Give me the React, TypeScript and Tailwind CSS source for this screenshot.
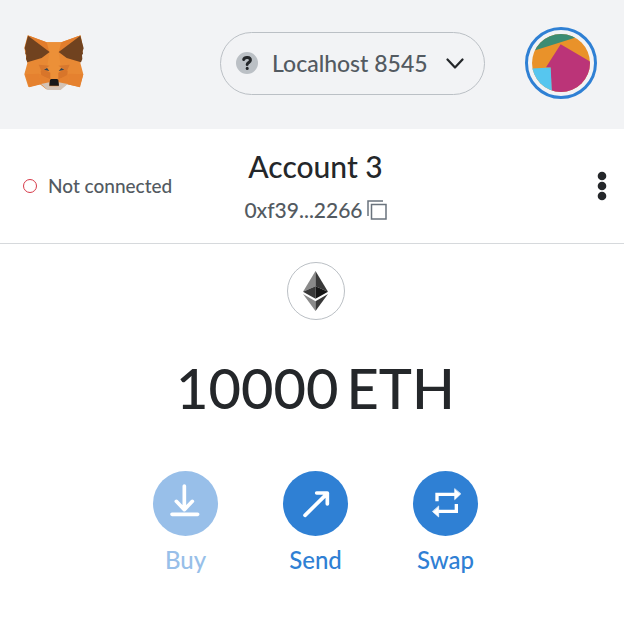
import type { ReactNode } from "react";

function Fox() {
  return (
    <svg viewBox="30 32 180 168" className="h-14 w-15" role="img" aria-label="MetaMask">
      <path d="M41 33 98 54h44l58-21 7 38-8 45 9 34-11 38-38-8-20 15h-42l-19-15-35 8-12-38 9-33-9-47z" fill="#e88934" />
      <path d="M98 54h44l-8 31 6 38-5 43h-30l-5-43 6-38z" fill="#ec9038" />
      <path d="M41 33 98 54l8 31zM200 33l-58 21-8 31z" fill="#e27d2c" />
      <path d="M42 34 107 83 83 101 40 114 36 104 37 92 34 88 35 80 32 72z" fill="#70421f" />
      <path d="M199 34 134 83l24 18 43 13 4-10-1-12 3-4-1-8 3-8z" fill="#70421f" />
      <path d="M34 150 75 148 81 180 46 189zM208 150l-42-2-5 32 37 9z" fill="#e5812f" />
      <path d="M74 121 107 124 82 140zM167 121l-34 3 26 16z" fill="#d8782e" />
      <path d="m80 140 10-5 19 10v20l-27-10zM161 140l-10-5-18 10v20l27-10z" fill="#d8752a" />
      <path d="m75 148 34 18-3 13-25-1zM166 148l-33 18 3 13 25-1z" fill="#e5812f" />
      <path d="m90 136 9-5 7 9zM151 136l-9-5-8 9z" fill="#344250" />
      <path d="m81 179 25-5v12h28v-12l27 5-21 18h-39z" fill="#d3c3b6" />
      <path d="m108 166 4-2h17l4 2 2 18h-29z" fill="#171719" />
    </svg>
  );
}

function Avatar() {
  return (
    <svg viewBox="51 42 174 171" className="size-[58px] rounded-full" aria-hidden="true">
      <path d="M45 36h190v190H45z" fill="#e9922a" />
      <path d="M45 36h160L180 52 45 94z" fill="#3b8c73" />
      <path d="m137 71 98 58v97H110l-3-85-14-1z" fill="#bb3478" />
      <path d="m45 144 62-3 4 80H45z" fill="#56c6ef" />
    </svg>
  );
}

function Ethereum() {
  return (
    <svg viewBox="80 58 74 118" className="h-10 w-[25px]" aria-hidden="true">
      <path d="M117 58v45l-37 16z" fill="#8a8a8a" />
      <path d="M117 58v45l37 16z" fill="#393939" />
      <path d="m80 119 37-16v37z" fill="#393939" />
      <path d="m154 119-37-16v37z" fill="#151515" />
      <path d="m80 126 37 21v29z" fill="#8a8a8a" />
      <path d="m154 126-37 21v29z" fill="#393939" />
    </svg>
  );
}

function Action({ label, disabled, children }: { label: string; disabled?: boolean; children: ReactNode }) {
  return (
    <button
      type="button"
      disabled={disabled}
      className="flex w-[65px] flex-col items-center gap-2 text-[#2f80d4] disabled:text-[#98bfe9]"
    >
      <span className="size-[65px] rounded-full bg-current">
        <svg viewBox="0 0 195 195" className="size-full" fill="none" stroke="white" strokeLinecap="round" strokeLinejoin="round" aria-hidden="true">
          {children}
        </svg>
      </span>
      <span className="text-2xl font-medium">{label}</span>
    </button>
  );
}

export default function App() {
  return (
    <div className="min-h-screen bg-white font-['Lato',sans-serif] text-[#24272a]">
      <header className="flex items-center gap-10 bg-[#f2f3f5] pt-[27px] pr-[27px] pb-[30px] pl-6">
        <Fox />
        <div className="relative ml-auto flex items-center">
          <span className="pointer-events-none absolute left-4 flex size-[22px] items-center justify-center rounded-full bg-[#bbc0c5]">
            <svg viewBox="0 0 22 22" className="size-full" fill="none" stroke="#24272a" strokeWidth="3" strokeLinecap="round" aria-hidden="true">
              <path d="M7.7 7.5C8.5 4.7 14.5 4.6 14.4 8.2c0 2.1-3.1 2.4-3.2 4.3" />
              <path d="M11.2 16.3v.1" />
            </svg>
          </span>
          <select
            aria-label="Network"
            className="h-[63px] w-[265px] appearance-none rounded-full border border-[#bbc0c5] bg-transparent pl-[51px] text-[23px] font-medium text-[#535a61]"
          >
            <option>Localhost 8545</option>
          </select>
          <svg viewBox="0 0 18 11" className="pointer-events-none absolute right-[21px] h-[11px] w-[18px]" fill="none" stroke="#24272a" strokeWidth="2.2" strokeLinecap="round" strokeLinejoin="round" aria-hidden="true">
            <path d="m1.5 1.5 7.5 8 7.5-8" />
          </svg>
        </div>
        <button type="button" aria-label="Accounts" className="flex size-18 items-center justify-center rounded-full border-3 border-[#2f80d4]">
          <Avatar />
        </button>
      </header>

      <section className="grid h-[115px] grid-cols-[1fr_auto_1fr] items-center border-b border-[#d6d9dc] pr-4 pl-[23px]">
        <div className="flex items-center gap-[11px] text-[19px] font-medium text-[#535a61]">
          <span className="size-3.5 rounded-full border border-[#d73a49]" />
          Not connected
        </div>
        <div className="flex flex-col items-center gap-2.5 pt-0.5">
          <h1 className="text-[30px] leading-9 font-medium">Account 3</h1>
          <button type="button" className="flex items-center gap-1 text-[21px] leading-8 font-medium text-[#535a61]">
            0xf39...2266
            <svg viewBox="0 0 20 20" className="size-5" fill="none" stroke="#6a737d" strokeWidth="1.5" aria-hidden="true">
              <path d="M1 16V1h15M4.5 4.5h14.5v14.5H4.5z" />
            </svg>
          </button>
        </div>
        <button type="button" aria-label="Account options" className="justify-self-end">
          <svg viewBox="0 0 12 30" className="h-[30px] w-3" fill="#24272a" aria-hidden="true">
            <circle cx="6" cy="5" r="4.3" />
            <circle cx="6" cy="15" r="4.3" />
            <circle cx="6" cy="25" r="4.3" />
          </svg>
        </button>
      </section>

      <main className="flex flex-col items-center pt-[18px] pr-4 pl-[23px]">
        <div className="flex size-[58px] items-center justify-center rounded-full border border-[#bbc0c5]">
          <Ethereum />
        </div>
        <p className="mt-8 flex gap-2 text-[56px] leading-[72px] font-medium">
          <span>10000</span>
          <span>ETH</span>
        </p>
        <div className="mt-[47px] flex gap-[65px]">
          <Action label="Buy" disabled>
            <path d="M94 45v68M70 91l24 25 24-25M57 130h77" strokeWidth="11" />
          </Action>
          <Action label="Send">
            <path d="m66 133 67-66M101 66h32v33" strokeWidth="11" />
          </Action>
          <Action label="Swap">
            <path d="M72 91V70h54M130 99v22H76" strokeWidth="10" strokeLinecap="butt" strokeLinejoin="miter" />
            <path d="M125 54v32l18-17zM77 106v32l-18-16z" fill="white" strokeWidth="2" />
          </Action>
        </div>
      </main>
    </div>
  );
}
